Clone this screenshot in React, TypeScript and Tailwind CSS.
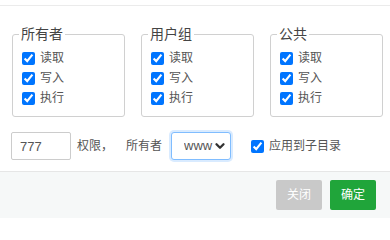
import { ChevronDown } from "lucide-react";

const groups = ["所有者", "用户组", "公共"];
const perms = ["读取", "写入", "执行"];

function PermGroup({ title }: { title: string }) {
  return (
    <fieldset className="w-[113px] rounded-[3px] border border-[#d0d0d0] pl-[9px] pt-[4px] pb-[8px]">
      {/* legend sits inside the fieldset padding, so pull it back a little */}
      <legend className="-ml-[3px] px-[2px] text-[14px] leading-[20px] text-[#444]">{title}</legend>
      {perms.map((p) => (
        <label key={p} className="flex h-5 items-center gap-[5px] text-[12px] text-[#555]">
          <input type="checkbox" defaultChecked className="m-0 h-[13px] w-[13px]" />
          <span>{p}</span>
        </label>
      ))}
    </fieldset>
  );
}

export default function App() {
  return (
    <div
      className="h-[218px] w-[390px] bg-white"
      style={{ fontFamily: '"Liberation Sans", "Noto Sans CJK SC", sans-serif' }}
    >
      <div className="h-[6px] border-b border-[#ebebeb]" />

      <div className="flex gap-4 pl-3 pt-[18px]">
        {groups.map((g) => (
          <PermGroup key={g} title={g} />
        ))}
      </div>

      <div className="mt-[15px] flex h-[28px] items-center pl-[11px]">
        <input
          defaultValue="777"
          className="h-[28px] w-[60px] rounded-[2px] border border-[#ccc] px-[8px] text-[13px] text-[#555] outline-none"
        />
        <span className="ml-[6px] text-[12px] text-[#555]">权限，</span>
        <span className="ml-[13px] text-[12px] text-[#555]">所有者</span>
        <div className="relative ml-[9px] h-[28px] w-[60px]">
          <select className="h-full w-full appearance-none rounded-[3px] border border-[#80bdff] bg-white pl-[12px] text-[13px] text-[#555] shadow-[0_0_0_2px_rgba(0,123,255,0.15)] outline-none">
            <option>www</option>
          </select>
          <ChevronDown
            className="pointer-events-none absolute right-[4px] top-[7px] h-[14px] w-[14px] text-[#333]"
            strokeWidth={4}
          />
        </div>
        <label className="ml-5 flex items-center gap-[5px] text-[12px] text-[#555]">
          <input type="checkbox" defaultChecked className="m-0 h-[13px] w-[13px]" />
          <span>应用到子目录</span>
        </label>
      </div>

      <div className="mt-[11px] flex h-[47px] justify-end gap-2 border-t border-[#e6e6e6] bg-[#f6f8f8] pr-[14px] pt-[8px]">
        <button className="h-[30px] w-[46px] rounded-[2px] bg-[#c9c9c9] text-[12px] text-white">关闭</button>
        <button className="h-[30px] w-[46px] rounded-[2px] bg-[#20a53a] text-[12px] text-white">确定</button>
      </div>
    </div>
  );
}
